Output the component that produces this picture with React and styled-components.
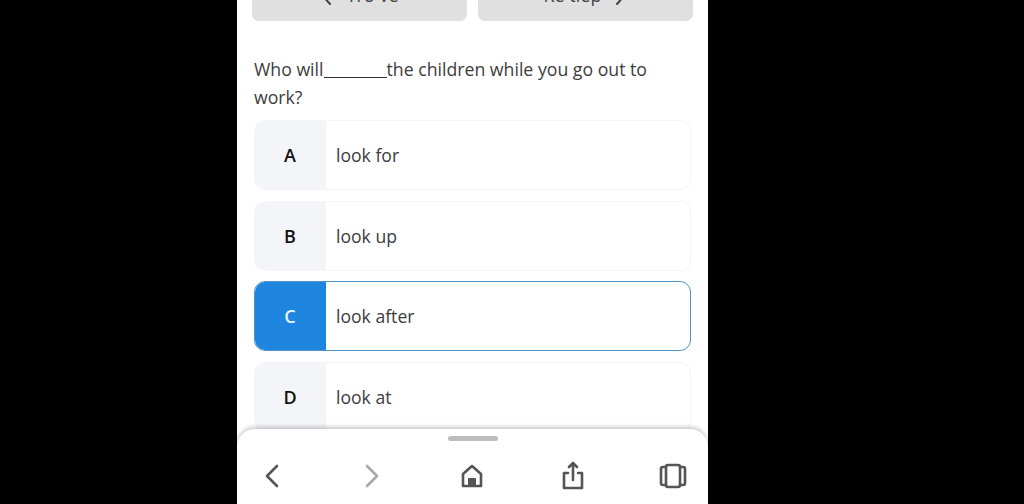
import React from 'react';
import styled, { createGlobalStyle } from 'styled-components';

const Global = createGlobalStyle`
  html, body {
    margin: 0;
    height: 100%;
    background: #000;
    overflow: hidden;
  }
  body {
    font-family: "Open Sans", "Liberation Sans", sans-serif;
  }
`;

const Stage = styled.div`
  display: flex;
  height: 504px;
  width: 1024px;
  padding-left: 237px;
  box-sizing: border-box;
`;

const Phone = styled.div`
  position: relative;
  width: 471px;
  height: 504px;
  background: #fff;
  overflow: hidden;
`;

const Content = styled.div`
  display: flex;
  flex-direction: column;
  padding: 0 17px;
`;

const NavRow = styled.div`
  display: flex;
  gap: 11px;
  margin: -19px -2px 0;
`;

const NavButton = styled.div`
  flex: 1;
  height: 40px;
  display: flex;
  align-items: center;
  justify-content: center;
  gap: 14px;
  background: #e0e0e0;
  border-radius: 7px;
  color: #444;
  font-size: 18px;
  padding-bottom: 13px;
  box-sizing: border-box;
`;

const NavChevron = styled.svg`
  width: 12px;
  height: 22px;
  fill: none;
  stroke: #444;
  stroke-width: 2;
  stroke-linecap: round;
  stroke-linejoin: round;
`;

const Question = styled.p`
  margin: 34px 0 9px;
  font-size: 17.7px;
  line-height: 28px;
  color: #3c3c3c;
`;

const Blank = styled.span`
  display: inline-block;
  width: 63px;
  border-bottom: 1px solid #333;
  height: 20px;
  vertical-align: baseline;
  margin-bottom: -2px;
`;

const Options = styled.div`
  display: flex;
  flex-direction: column;
  gap: 10.5px;
`;

const Option = styled.div`
  display: flex;
  height: 70px;
  box-sizing: border-box;
  border-radius: 11px;
  overflow: hidden;
  background: #fff;
  border: ${(p) => (p.$selected ? '1.5px solid #4f95c9' : '1px solid #f5f5f7')};
`;

const Letter = styled.div`
  width: 72px;
  margin: -1px 0 -1px -1px;
  flex-shrink: 0;
  display: flex;
  align-items: center;
  justify-content: center;
  font-size: 18px;
  font-weight: 600;
  background: ${(p) => (p.$selected ? '#1f86e0' : '#f4f5f9')};
  color: ${(p) => (p.$selected ? '#e8f4ff' : '#111')};
`;

const OptionText = styled.div`
  display: flex;
  align-items: center;
  padding-left: 10px;
  font-size: 17.6px;
  color: #3c3c3c;
`;

const Toolbar = styled.div`
  position: absolute;
  left: 0;
  right: 0;
  bottom: 0;
  height: 75px;
  box-sizing: border-box;
  background: #fff;
  border-radius: 18px 18px 0 0;
  box-shadow: 0 -2px 4px rgba(0, 0, 0, 0.22);
  display: flex;
  flex-direction: column;
  align-items: center;
`;

const Handle = styled.div`
  width: 50px;
  height: 5px;
  margin-top: 7px;
  border-radius: 3px;
  background: #bdbdbd;
`;

const ToolIcons = styled.div`
  align-self: stretch;
  display: grid;
  grid-template-columns: repeat(5, 1fr);
  justify-items: center;
  padding: 20px 0 0;
  margin: 0 -15px;
`;

const ToolIcon = styled.svg`
  width: 30px;
  height: 30px;
  fill: none;
  stroke: ${(p) => (p.$muted ? '#a8a8a8' : '#555')};
  stroke-width: 2.6;
  stroke-linecap: round;
  stroke-linejoin: round;
`;

const options = [
  { letter: 'A', text: 'look for' },
  { letter: 'B', text: 'look up' },
  { letter: 'C', text: 'look after', selected: true },
  { letter: 'D', text: 'look at' },
];

export default function App() {
  return (
    <>
      <Global />
      <Stage>
        <Phone>
          <Content>
            <NavRow>
              <NavButton>
                <NavChevron viewBox="0 0 12 22">
                  <path d="M10 2 L2 11 L10 20" />
                </NavChevron>
                Trở về
              </NavButton>
              <NavButton>
                Kế tiếp
                <NavChevron viewBox="0 0 12 22">
                  <path d="M2 2 L10 11 L2 20" />
                </NavChevron>
              </NavButton>
            </NavRow>
            <Question>
              Who will<Blank />the children while you go out to work?
            </Question>
            <Options>
              {options.map((o) => (
                <Option key={o.letter} $selected={o.selected}>
                  <Letter $selected={o.selected}>{o.letter}</Letter>
                  <OptionText>{o.text}</OptionText>
                </Option>
              ))}
            </Options>
          </Content>
          <Toolbar>
            <Handle />
            <ToolIcons>
              <ToolIcon viewBox="0 0 30 30">
                <path d="M20 5 L10 15 L20 25" />
              </ToolIcon>
              <ToolIcon viewBox="0 0 30 30" $muted>
                <path d="M10 5 L20 15 L10 25" />
              </ToolIcon>
              <ToolIcon viewBox="0 0 30 30">
                <path d="M6 13 L15 5 L24 13 V25 H6 Z" />
                <rect x="11" y="17" width="8" height="8" fill="#555" stroke="none" />
              </ToolIcon>
              <ToolIcon viewBox="0 0 30 30">
                <path d="M10 12 H6 V27 H24 V12 H20" />
                <path d="M15 19 V2 M11 6 L15 2 L19 6" />
              </ToolIcon>
              <ToolIcon viewBox="0 0 30 30">
                <rect x="8" y="4" width="14" height="22" rx="2" />
                <path d="M8 6 H5 Q3 6 3 8 V22 Q3 24 5 24 H8 M22 6 H25 Q27 6 27 8 V22 Q27 24 25 24 H22" />
              </ToolIcon>
            </ToolIcons>
          </Toolbar>
        </Phone>
      </Stage>
    </>
  );
}
